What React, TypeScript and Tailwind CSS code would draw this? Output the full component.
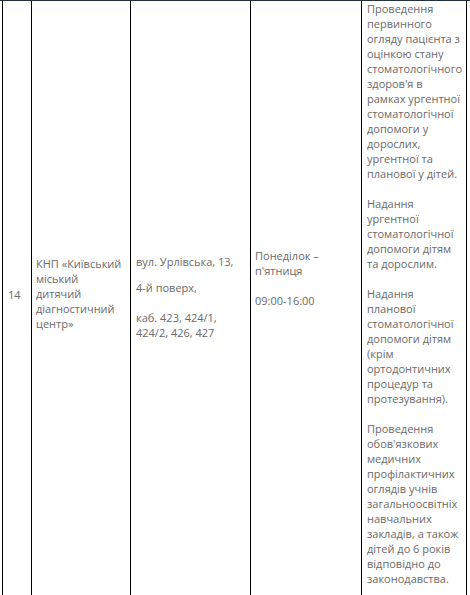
import React from "react";

const font = { fontFamily: '"Open Sans", "Noto Sans", sans-serif' };

const Lines: React.FC<{ lines: string[]; className?: string }> = ({
  lines,
  className = "",
}) => (
  <div className={className}>
    {lines.map((l, i) => (
      <div key={i} className="whitespace-nowrap">
        {l}
      </div>
    ))}
  </div>
);

const services: string[][] = [
  [
    "Проведення",
    "первинного",
    "огляду пацієнта з",
    "оцінкою стану",
    "стоматологічного",
    "здоров'я в",
    "рамках ургентної",
    "стоматологічної",
    "допомоги у",
    "дорослих,",
    "ургентної та",
    "планової у дітей.",
  ],
  [
    "Надання",
    "ургентної",
    "стоматологічної",
    "допомоги дітям",
    "та дорослим.",
  ],
  [
    "Надання",
    "планової",
    "стоматологічної",
    "допомоги дітям",
    "(крім",
    "ортодонтичних",
    "процедур та",
    "протезування).",
  ],
  [
    "Проведення",
    "обов'язкових",
    "медичних",
    "профілактичних",
    "оглядів учнів",
    "загальноосвітніх",
    "навчальних",
    "закладів, а також",
    "дітей до 6 років",
    "відповідно до",
    "законодавства.",
  ],
];

export default function App() {
  return (
    <div
      className="w-[470px] h-[595px] overflow-hidden bg-white border-t border-[#23303d] text-[11px] leading-[15px] text-[#6a6a6a]"
      style={font}
    >
      <div className="ml-[2px] flex w-[465px] h-[594px]">
        {/* № */}
        <div className="w-[29px] shrink-0 border-l border-black flex items-center pl-[5px] pb-[8px]">
          14
        </div>

        {/* Назва закладу */}
        <div className="w-[99px] shrink-0 border-l border-black flex items-center pl-[4px] pb-[10px]">
          <Lines
            lines={[
              "КНП «Київський",
              "міський",
              "дитячий",
              "діагностичний",
              "центр»",
            ]}
          />
        </div>

        {/* Адреса */}
        <div className="w-[120px] shrink-0 border-l border-black flex items-center pl-[5px] pb-[3px]">
          <div>
            <div className="whitespace-nowrap">вул. Урлівська, 13,</div>
            <div className="whitespace-nowrap mt-[11px]">4-й поверх,</div>
            <div className="whitespace-nowrap mt-[15px]">каб. 423, 424/1,</div>
            <div className="whitespace-nowrap">424/2, 426, 427</div>
          </div>
        </div>

        {/* Графік */}
        <div className="w-[111px] shrink-0 border-l border-black flex items-center pl-[4px] pb-[41px]">
          <div>
            <div className="whitespace-nowrap">Понеділок –</div>
            <div className="whitespace-nowrap">п'ятниця</div>
            <div className="whitespace-nowrap mt-[15px]">09:00-16:00</div>
          </div>
        </div>

        {/* Послуги */}
        <div className="w-[106px] shrink-0 border-l border-r border-black pl-[5px]">
          {services.map((p, i) => (
            <Lines key={i} lines={p} className={i > 0 ? "mt-[15px]" : ""} />
          ))}
        </div>
      </div>
    </div>
  );
}
